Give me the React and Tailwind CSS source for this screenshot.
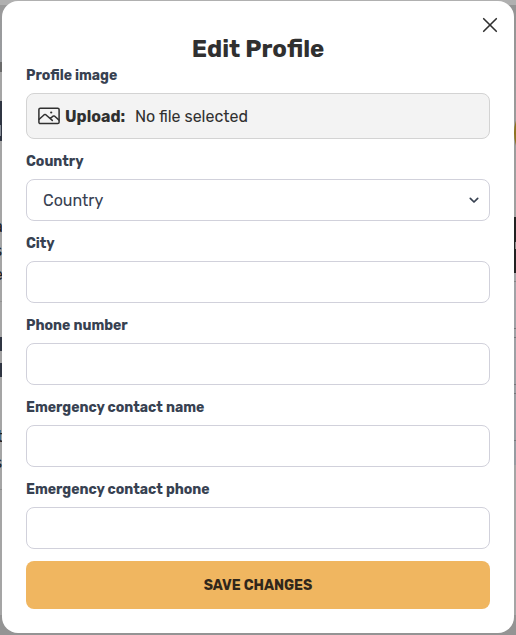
const labelClass =
  "block h-5 text-sm leading-[22px] font-bold text-[#374151]";
const boxClass = "mt-2 h-[42px] w-full rounded-lg border border-[#d1d1db] bg-white";

// The dimmed page, visible only around the dialog's edges.
function Backdrop() {
  return (
    <div className="absolute inset-0 flex flex-col overflow-hidden bg-[#a5a5a5] text-base leading-6 text-[#222222] antialiased" aria-hidden="true">
      <div className="h-[5px] shrink-0 bg-[#b0b0b0]" />
      <div className="flex grow justify-between">
        <div className="flex w-2 flex-col">
          <div className="h-[57px] bg-linear-to-b from-[#9a9a9a] to-[#989b9f]" />
          <div className="h-2.5 bg-[#6a6a6a]" />
          <div className="mt-[29px] flex h-10 items-end bg-[#2f3542] pb-[5px]">
            <div className="h-[11px] w-px bg-[#858b95]" />
          </div>
          <div className="mt-[74px] -ml-1.5 flex h-[72px] flex-col">
            <span>a</span>
            <span>s</span>
            <span>e</span>
          </div>
          <div className="mt-[14px] h-px bg-[#929292]" />
          <div className="mt-[35px] flex h-10 flex-col justify-center bg-[#2f3542]">
            <div className="h-3 bg-[#a2a2a2]" />
          </div>
          <div className="mt-[48px] -ml-[3px] flex h-[50px] flex-col justify-between">
            <span>t</span>
            <span className="-ml-[3px]">s</span>
          </div>
          <div className="mt-3.5 h-px bg-[#8e8e8e]" />
        </div>
        <div className="flex w-2 flex-col">
          <div className="h-[212px] overflow-hidden bg-linear-to-b from-[#949494] to-[#a0a0a0] pt-[88px] pl-1.5">
            <div className="size-20 rounded-full bg-[#8e7420]" />
          </div>
          <div className="flex h-14 items-center justify-end bg-[#222222]">
            <div className="h-[7px] w-px bg-[#8a8a8a]" />
          </div>
          <div className="flex h-[192px] flex-col bg-linear-to-b from-[#a3a3a7] to-[#969ba1]">
            <div className="mt-2 h-px bg-[#858585]" />
            <div className="mt-[46px] h-2.5 border-y border-[#77777b]" />
            <div className="mt-[46px] h-2.5 border-y border-[#77777b]" />
            <div className="mt-[46px] h-px bg-[#77777b]" />
          </div>
        </div>
      </div>
      <div className="h-5 shrink-0 bg-[#949494]" />
    </div>
  );
}

function UploadIcon() {
  return (
    <svg className="h-[18px] w-[22px] shrink-0" viewBox="0 0 22 18" fill="none" stroke="#303030" strokeWidth="1.5" strokeLinecap="round" strokeLinejoin="round">
      <rect x="0.9" y="1.2" width="20.2" height="15.4" rx="1.4" />
      <path d="M1.2 12.2 6.2 7.7Q7 7.1 7.8 7.7L14.3 13.4M12.2 11.5 15.1 9.2Q15.9 8.6 16.7 9.2L20.8 12.9" />
      <circle cx="13.2" cy="5.5" r="1.1" fill="#303030" stroke="none" />
    </svg>
  );
}

function Field({ label, id }) {
  return (
    <div>
      <label htmlFor={id} className={labelClass}>{label}</label>
      <input id={id} type="text" className={`${boxClass} block px-4 outline-none`} />
    </div>
  );
}

export default function App() {
  return (
    <div className="relative h-[635px] w-[516px] overflow-hidden pt-px font-[Rubik,Roboto,sans-serif]">
      <Backdrop />
      <main className="relative mx-0.5 flex h-[632px] flex-col rounded-2xl bg-white px-6 pt-3">
        <button type="button" aria-label="Close" className="-mr-3 flex size-6 self-end">
          <svg className="size-6" viewBox="0 0 24 24" fill="none" stroke="#303030" strokeWidth="1.6" strokeLinecap="round">
            <path d="M5.7 5.7 18.3 18.3M18.3 5.7 5.7 18.3" />
          </svg>
        </button>
        <h1 className="-mt-1 h-8 text-center text-2xl leading-8 font-bold text-[#303030]">Edit Profile</h1>
        <form className="flex flex-col gap-3">
          <div>
            <span className={labelClass}>Profile image</span>
            <label className="mt-2 flex h-[46px] items-center rounded-lg border border-[#d3d3d3] bg-[#f3f3f3] pl-[11px] text-base text-[#303030]">
              <UploadIcon />
              <span className="ml-[5px] w-[70px] pt-0.5 font-bold">Upload:</span>
              <span className="pt-0.5">No file selected</span>
            </label>
          </div>
          <div>
            <span className={labelClass}>Country</span>
            <div className={`${boxClass} flex items-center justify-between pr-[9px] pl-4 text-base text-[#374151]`}>
              <span className="pt-0.5">Country</span>
              <svg className="size-3" viewBox="0 0 12 12" fill="none" stroke="#374151" strokeWidth="1.7" strokeLinecap="round" strokeLinejoin="round">
                <path d="M2.3 4.3 6 8 9.7 4.3" />
              </svg>
            </div>
          </div>
          <Field id="city" label="City" />
          <Field id="phone" label="Phone number" />
          <Field id="emergency-name" label="Emergency contact name" />
          <Field id="emergency-phone" label="Emergency contact phone" />
          <button type="button" className="h-12 rounded-lg bg-[#f0b660] pt-0.5 text-sm font-bold text-[#30271b]">SAVE CHANGES</button>
        </form>
      </main>
    </div>
  );
}
